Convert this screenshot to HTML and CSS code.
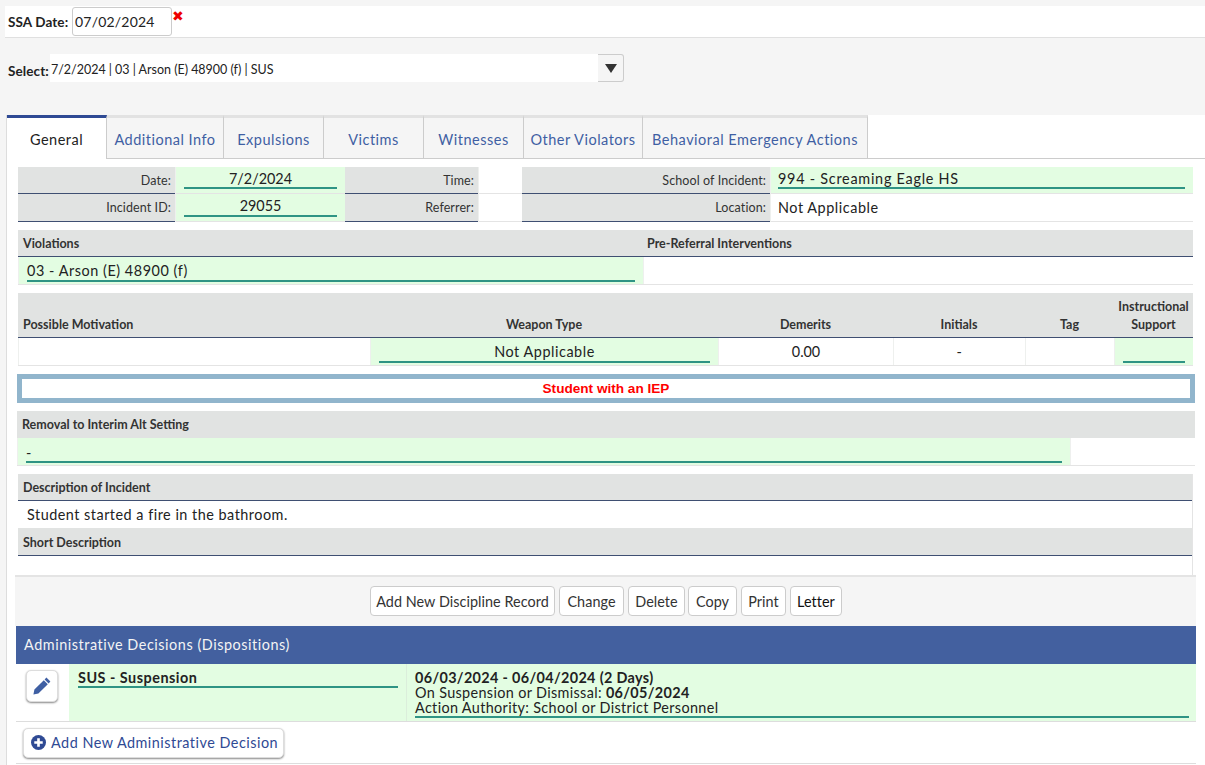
FILE: index.html
```html
<!DOCTYPE html>
<html lang="en">
<head>
<meta charset="utf-8">
<title>Discipline</title>
<link rel="stylesheet" href="styles.css">
</head>
<body>
<div class="ssa-row">
  <span class="bold-label">SSA Date:</span>
  <input class="date-input" value="07/02/2024">
  <span class="clear">✖</span>
</div>
<div class="select-row">
  <span class="bold-label">Select:</span>
  <div class="select-box">
    <span class="select-text">7/2/2024 | 03 | Arson (E) 48900 (f) | SUS</span>
    <span class="select-btn"><svg width="12" height="9" viewBox="0 0 12 9"><path d="M0 0H12L6 9Z" fill="#333"/></svg></span>
  </div>
</div>
<div class="panel">
  <div class="tabs">
    <div class="tab active t1">General</div>
    <div class="tab t2">Additional Info</div>
    <div class="tab t3">Expulsions</div>
    <div class="tab t3">Victims</div>
    <div class="tab t3">Witnesses</div>
    <div class="tab t4">Other Violators</div>
    <div class="tab t5">Behavioral Emergency Actions</div>
  </div>
  <div class="tab-body">
    <div class="grid g-info">
      <div class="lab">Date:</div><div class="val green c"><span class="ul num">7/2/2024</span></div>
      <div class="lab">Time:</div><div class="val"></div>
      <div class="lab">School of Incident:</div><div class="val green val-school"><span class="ul wide">994 - Screaming Eagle HS</span></div>
      <div class="lab">Incident ID:</div><div class="val green c"><span class="ul num tall">29055</span></div>
      <div class="lab">Referrer:</div><div class="val"></div>
      <div class="lab">Location:</div><div class="val val-school"><span class="plain">Not Applicable</span></div>
    </div>
    <div class="grid g-viol">
      <div class="hd">Violations</div><div class="hd hd-pre">Pre-Referral Interventions</div>
      <div class="val green"><span class="ul">03 - Arson (E) 48900 (f)</span></div><div class="val"></div>
    </div>
    <div class="grid g-mot">
      <div class="hd2">Possible Motivation</div>
      <div class="hd2 c">Weapon Type</div>
      <div class="hd2 c">Demerits</div>
      <div class="hd2 c">Initials</div>
      <div class="hd2 c">Tag</div>
      <div class="hd2 c">Instructional Support</div>
      <div class="val"></div>
      <div class="val green c"><span class="ul">Not Applicable</span></div>
      <div class="val c"><span class="plain num">0.00</span></div>
      <div class="val c"><span class="plain">-</span></div>
      <div class="val"></div>
      <div class="val green"><span class="ul">&nbsp;</span></div>
    </div>
    <div class="iep">Student with an IEP</div>
    <div class="grid g-rem">
      <div class="hd hd-rem">Removal to Interim Alt Setting</div>
      <div class="val green"><span class="ul">-</span></div><div class="val"></div>
    </div>
    <div class="desc">
      <div class="hd line">Description of Incident</div>
      <div class="desc-text">Student started a fire in the bathroom.</div>
      <div class="hd line2">Short Description</div>
      <div class="desc-empty"></div>
    </div>
    <div class="actions">
      <button class="btn b1">Add New Discipline Record</button>
      <button class="btn b2">Change</button>
      <button class="btn b3">Delete</button>
      <button class="btn b4">Copy</button>
      <button class="btn b5">Print</button>
      <button class="btn b6">Letter</button>
    </div>
    <div class="banner">Administrative Decisions (Dispositions)</div>
    <div class="decision">
      <div class="edit-cell">
        <button class="edit-btn" aria-label="Edit"><svg width="18" height="18" viewBox="0 0 18 18"><path d="M13.4 .6 17.4 4.6 15.6 6.4 11.6 2.4Z M10.8 3.2 14.8 7.2 5.4 16.6 .4 17.6 1.4 12.6Z" fill="#3f5fa3"/></svg></button>
      </div>
      <div class="dec-type"><b class="ul2">SUS - Suspension</b></div>
      <div class="dec-info">
        <div class="ul3">
          <b>06/03/2024 - 06/04/2024 (2 Days)</b><br>
          On Suspension or Dismissal: <b>06/05/2024</b><br>
          Action Authority: School or District Personnel
        </div>
      </div>
    </div>
    <div class="add-row">
      <button class="add-btn"><svg width="15" height="15" viewBox="0 0 16 16"><circle cx="8" cy="8" r="8" fill="#2f4a94"/><path d="M6.6 3.5h2.8v3.1h3.1v2.8H9.4v3.1H6.6V9.4H3.5V6.6h3.1Z" fill="#fff"/></svg>Add New Administrative Decision</button>
    </div>
  </div>
</div>
</body>
</html>
```
FILE: styles.css
```css
* { box-sizing: border-box; }
html, body { margin: 0; padding: 0; }
body {
  width: 1205px;
  height: 765px;
  overflow: hidden;
  background: #f5f5f5;
  font-family: Lato, "Open Sans", sans-serif;
  font-size: 14.4px;
  color: #222;
}
.ssa-row {
  margin: 6px 0 0 5px;
  height: 32px;
  background: #fff;
  border-bottom: 1px solid #e0e0e0;
  display: flex;
  align-items: flex-start;
  padding: 1px 0 0 3px;
}
.bold-label { font-size: 13.5px; font-weight: 700; letter-spacing: 0.1px; color: #222; }
.ssa-row .bold-label { width: 64px; margin-top: 7px; white-space: nowrap; }
.date-input {
  width: 100px;
  height: 29px;
  border: 1px solid #ccc;
  border-radius: 3px;
  padding: 0 2px;
  font: 14px Lato, sans-serif;
  letter-spacing: 0.2px;
  color: #222;
  background: #fff;
}
.clear { color: #e00; font-size: 14px; line-height: 18px; }
.select-row {
  margin: 16px 0 0 8px;
  height: 28px;
  display: flex;
  align-items: flex-start;
}
.select-row .bold-label { width: 42px; margin-top: 9px; }
.select-box { display: flex; height: 28px; }
.select-text {
  width: 548px;
  background: #fff;
  font-size: 12.5px;
  letter-spacing: -0.02px;
  line-height: 31px;
  padding-left: 1px;
  height: 28px;
}
.select-btn {
  width: 26px;
  background: #f5f5f5;
  border: 1px solid #ccc;
  border-left: 0;
  border-radius: 0 3px 3px 0;
  display: flex;
  align-items: center;
  justify-content: center;
}
.panel {
  margin: 33px 0 0 6px;
  background: #fff;
  border-left: 1px solid #ddd;
  height: 650px;
}
.tabs {
  display: flex;
  height: 44px;
  border-bottom: 1px solid #ccc;
}
.tab {
  height: 43px;
  border-top: 3px solid #e2e2e2;
  border-right: 1px solid #ccc;
  background: #f5f5f5;
  color: #3f5fa3;
  text-align: center;
  line-height: 43px;
  letter-spacing: 0.5px;
  font-size: 14.5px;
  white-space: nowrap;
}
.tab.active {
  background: #fff;
  border-top-color: #2f4a94;
  color: #222;
  height: 44px;
}
.t1 { width: 100px; }
.t2 { width: 117px; }
.t3 { width: 100px; }
.t4 { width: 119px; }
.t5 { width: 225px; }
.tab-body { padding: 8px 0 0 8px; }
.grid { display: grid; margin-left: 3px; width: 1175px; border-bottom: 1px solid #e4e4e4; border-right: 1px solid #e4e4e4; }
.g-info {
  grid-template-columns: 157px 170px 133px 44px 248px 423px;
  grid-template-rows: 27px 28px;
  border-bottom: 0;
}
.g-info .val { box-shadow: inset 0 -1px #e4e4e4; }
.g-info .val-school { padding-left: 7px; }
.lab {
  background: #e1e3e2;
  border-bottom: 1px solid #3f4f72;
  font-size: 12.5px;
  color: #333;
  text-align: right;
  padding: 6px 4px 0 0;
  letter-spacing: 0.1px;
}
.val {
  background: #fff;
  font-size: 14.4px;
  letter-spacing: 0.55px;
  color: #222;
  padding: 0 8px;
  height: 100%;
  border-left: 1px solid #eef0ee;
}
.green { background: #e3fde2; }
.c { text-align: center; }
.ul {
  display: block;
  border-bottom: 2px solid #2f9484;
  height: 22px;
  line-height: 24px;
}
.ul.tall { height: 23px; }
.num { letter-spacing: 0; }
.wide { letter-spacing: 0.75px; }
.plain { display: block; line-height: 28px; }
.g-viol { margin-top: 8px; grid-template-columns: 625px 550px; grid-template-rows: 27px 27px; }
.hd {
  background: #e1e3e2;
  border-bottom: 1px solid #3f4f72;
  font-size: 12.5px;
  font-weight: 700;
  color: #333;
  padding: 6px 0 0 5px;
}
.hd-pre { padding-left: 4px; }
.g-viol .ul { height: 25px; line-height: 28px; }
.g-mot {
  margin-top: 8px;
  grid-template-columns: 352px 348px 175px 132px 89px 79px;
  grid-template-rows: 45px 27px;
}
.hd2 {
  background: #e1e3e2;
  border-bottom: 1px solid #3f4f72;
  font-size: 12.5px;
  font-weight: 700;
  color: #333;
  padding: 0 5px 3px;
  display: flex;
  align-items: flex-end;
  line-height: 18px;
}
.hd2.c { justify-content: center; text-align: center; }
.g-mot .ul { height: 25px; line-height: 28px; }
.iep {
  margin: 8px 0 0 2px;
  width: 1178px;
  height: 29px;
  border: 5px solid #91b5cc;
  background: #fff;
  color: #f00;
  font: 700 13.6px "Liberation Sans", Arial, sans-serif;
  text-align: center;
  line-height: 20px;
}
.g-rem {
  margin: 8px 0 0 2px;
  width: 1178px;
  grid-template-columns: 1053px 125px;
  grid-template-rows: 27px 27px;
}
.hd-rem { grid-column: 1 / 3; border-bottom: 0; }
.g-rem .ul { height: 25px; line-height: 30px; }
.desc { margin: 8px 0 0 3px; width: 1175px; background: #fff; border-right: 1px solid #e4e4e4; }
.line { height: 27px; }
.line2 { height: 28px; padding-top: 7px; }
.desc-text { height: 27px; padding-left: 9px; line-height: 27px; letter-spacing: 0.5px; }
.desc-empty { height: 19px; }
.actions {
  width: 1181px;
  height: 51px;
  background: #f5f5f5;
  border-top: 2px solid #e4e4e4;
  display: flex;
  gap: 4px;
  padding: 9px 0 0 355px;
}
.btn {
  height: 30px;
  padding: 0;
  background: #fff;
  border: 1px solid #ccc;
  border-radius: 4px;
  color: #333;
  font: 14.4px Lato, sans-serif;
  letter-spacing: 0.05px;
}
.b1 { width: 185px; }
.b2 { width: 65px; }
.b3 { width: 57px; }
.b4 { width: 49px; margin-left: -1px; }
.b5 { width: 45px; }
.b6 { width: 52px; color: #111; }
.banner {
  width: 1180px;
  margin-left: 1px;
  height: 38px;
  background: #43609f;
  color: #f4f4f4;
  font-size: 14.4px;
  letter-spacing: 0.55px;
  line-height: 38px;
  padding-left: 8px;
}
.decision {
  width: 1180px;
  margin-left: 1px;
  height: 58px;
  display: flex;
  border-bottom: 1px solid #ddd;
}
.edit-cell { width: 53px; padding: 6px 0 0 10px; }
.edit-btn {
  width: 32px;
  height: 32px;
  padding: 0;
  background: #fff;
  border: 1px solid #ddd;
  border-radius: 5px;
  box-shadow: 0 1px 2px #888;
  display: flex;
  align-items: center;
  justify-content: center;
}
.dec-type { width: 338px; background: #e3fde2; padding: 5px 8px 0 9px; border-right: 1px solid #dbeedb; }
.ul2 { display: block; border-bottom: 2px solid #2f9484; height: 19px; font-size: 14.4px; letter-spacing: 0.5px; line-height: 18px; }
.dec-info { flex: 1; background: #e3fde2; padding: 6px 7px 0 8px; }
.ul3 { border-bottom: 2px solid #2f9484; height: 48px; font-size: 14.4px; line-height: 15px; letter-spacing: 0.35px; }
.add-row { margin-left: 1px; width: 1180px; height: 42px; padding: 6px 0 0 7px; border-bottom: 1px solid #ddd; }
.add-btn {
  width: 261px;
  height: 30px;
  background: #fff;
  border: 1px solid #ddd;
  border-radius: 5px;
  box-shadow: 0 1px 2px #888;
  color: #2f4a94;
  font: 14.4px Lato, sans-serif;
  letter-spacing: 0.5px;
  display: flex;
  align-items: center;
  gap: 5px;
  padding: 0 0 1px 7px;
}
```
